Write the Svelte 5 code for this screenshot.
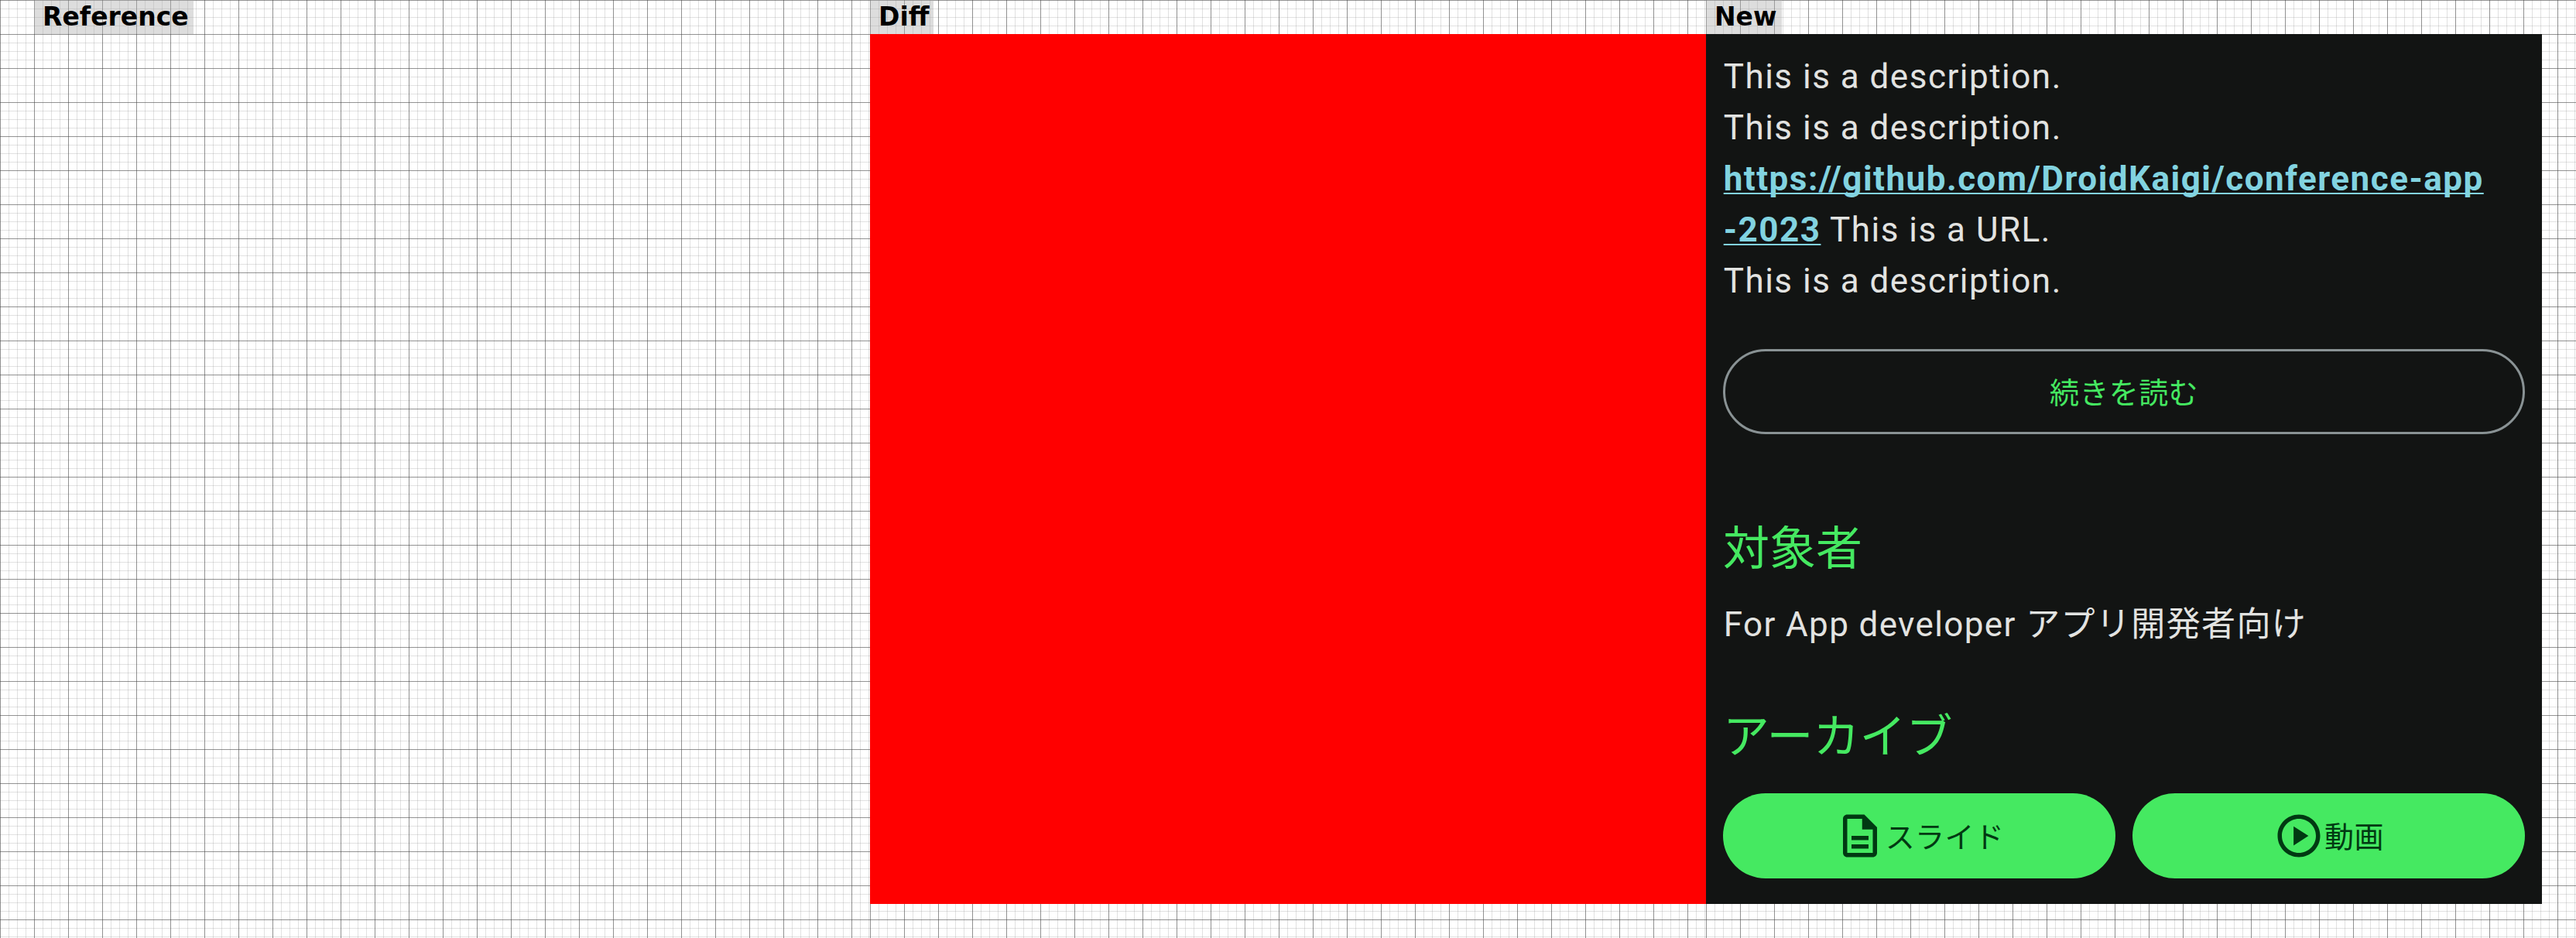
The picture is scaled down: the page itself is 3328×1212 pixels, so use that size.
<script>
  const lines = ['This is a description.', 'This is a description.'];
</script>

<main>
  <section class="panel first">
    <h2>Reference</h2>
  </section>
  <section class="panel middle">
    <h2>Diff</h2>
    <div class="diff"></div>
  </section>
  <section class="panel last">
    <h2>New</h2>
    <div class="screen">
      <div class="description">
        {#each lines as line}
          <p>{line}</p>
        {/each}
        <p><a href="#url">https://github.com/DroidKaigi/conference-app<br />-2023</a> This is a URL.</p>
        <p>This is a description.</p>
      </div>
      <button class="outlined"><span>続きを読む</span></button>
      <h3>対象者</h3>
      <p class="audience">For App developer アプリ開発者向け</p>
      <h3 class="archive">アーカイブ</h3>
      <div class="actions">
        <button class="filled">
          <svg viewBox="0 0 24 24"><path d="M8 16h8v2H8zm0-4h8v2H8zm6-10H6c-1.1 0-2 .9-2 2v16c0 1.1.89 2 1.99 2H18c1.1 0 2-.9 2-2V8l-6-6zm4 18H6V4h7v5h5v11z" /></svg>
          <span>スライド</span>
        </button>
        <button class="filled">
          <svg viewBox="0 0 24 24"><path d="M12 2C6.48 2 2 6.48 2 12s4.48 10 10 10 10-4.48 10-10S17.520 2 12 2zm0 18c-4.410 0-8-3.590-8-8s3.590-8 8-8 8 3.590 8 8-3.590 8-8 8zm-2.500-3.500l7-4.500-7-4.500v9z" /></svg>
          <span>動画</span>
        </button>
      </div>
    </div>
  </section>
</main>

<style>
  :global(body) {
    margin: 0;
    background: #fff;
  }
  main {
    display: grid;
    grid-template-columns: 1124px 1080px 1124px;
    width: 3328px;
    height: 1212px;
    overflow: hidden;
  }
  .panel {
    display: flex;
    flex-direction: column;
    align-items: flex-start;
    background-image:
      linear-gradient(to right, rgba(68, 68, 68, 0.5) 1px, transparent 1px),
      linear-gradient(to bottom, rgba(68, 68, 68, 0.5) 1px, transparent 1px),
      linear-gradient(to right, rgba(136, 136, 136, 0.25) 1px, transparent 1px),
      linear-gradient(to bottom, rgba(136, 136, 136, 0.25) 1px, transparent 1px);
    background-size: 44px 44px, 44px 44px, 11px 11px, 11px 11px;
  }
  .first {
    padding-left: 44px;
  }
  h2 {
    box-sizing: border-box;
    height: 44px;
    margin: 0;
    padding: 0 6px 0 11px;
    background: rgba(170, 170, 170, 0.4);
    color: #000;
    font: bold 33px/43px "DejaVu Sans", sans-serif;
  }
  .diff {
    width: 1080px;
    height: 1124px;
    background: #f00;
  }
  .screen {
    box-sizing: border-box;
    width: 1080px;
    height: 1124px;
    padding: 22px;
    background: #121413;
    color: #e2e3e1;
    font-family: Roboto, "Noto Sans CJK JP", sans-serif;
    font-size: 44px;
    letter-spacing: 1.375px;
  }
  .description {
    letter-spacing: 1.49px;
  }
  p {
    margin: 0;
    padding-left: 0.7px;
    line-height: 66px;
    white-space: nowrap;
  }
  a {
    color: #82d3e0;
    font-weight: 700;
    text-decoration: underline;
    text-decoration-thickness: 2.2px;
    text-underline-offset: 3px;
    text-decoration-skip-ink: none;
  }
  button {
    box-sizing: border-box;
    display: flex;
    align-items: center;
    justify-content: center;
    height: 110px;
    margin: 0;
    padding: 0;
    border: 0;
    border-radius: 55px;
    font: 400 38px/55px Roboto, "Noto Sans CJK JP", sans-serif;
    letter-spacing: 0.4px;
  }
  button span {
    padding-top: 4px;
  }
  .outlined {
    width: 100%;
    margin-top: 55px;
    border: 3px solid #899294;
    background: transparent;
    color: #45e961;
  }
  h3 {
    margin: 105px 0 0;
    color: #45e961;
    font: 400 60px/88px Roboto, "Noto Sans CJK JP", sans-serif;
    letter-spacing: 0;
  }
  .audience {
    margin-top: 20px;
  }
  .archive {
    margin-top: 69px;
  }
  .actions {
    display: grid;
    grid-template-columns: 1fr 1fr;
    gap: 22px;
    margin-top: 28px;
  }
  .filled {
    background: #45e961;
    color: #003912;
  }
  svg {
    width: 66px;
    height: 66px;
    fill: currentColor;
  }
</style>
